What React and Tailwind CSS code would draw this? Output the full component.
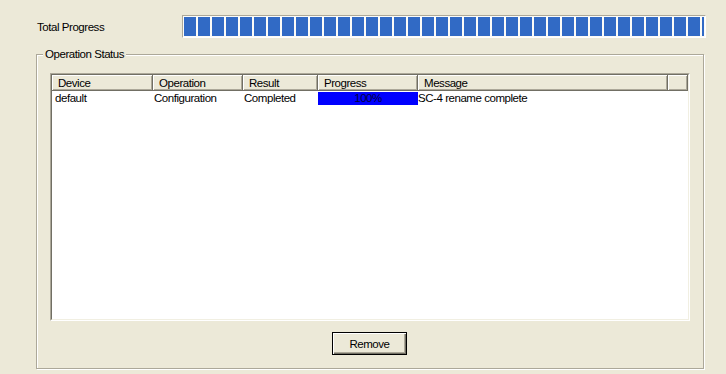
import React from 'react';

const columns = [
  { key: 'device', label: 'Device', width: 'w-[101px]' },
  { key: 'operation', label: 'Operation', width: 'w-[90px]' },
  { key: 'result', label: 'Result', width: 'w-[75px]' },
  { key: 'progress', label: 'Progress', width: 'w-[100px]' },
  { key: 'message', label: 'Message', width: 'w-[250px]' },
];

const rows = [
  {
    id: 1,
    device: 'default',
    operation: 'Configuration',
    result: 'Completed',
    progress: 100,
    message: 'SC-4 rename complete',
  },
];

const HeaderCell = ({ width, children }) => (
  <div
    className={`${width} h-full shrink-0 flex items-center pl-[6px] bg-[#ece9d8] border-r border-b border-[#716f64] shadow-[inset_1px_1px_0_#fff,inset_-1px_-1px_0_#aca899] whitespace-nowrap overflow-hidden`}
  >
    {children}
  </div>
);

const App = () => {
  const blocks = Array.from({ length: 38 });

  return (
    <div
      className="w-[726px] h-[374px] bg-[#ece9d8] text-black text-[11.5px] tracking-[-0.45px] overflow-hidden"
      style={{ fontFamily: '"Liberation Sans", Arial, sans-serif' }}
    >
      {/* Total progress */}
      <div className="flex items-center pt-[15px]">
        <div className="w-[182px] pl-[37px] leading-[14px]">Total Progress</div>
        <div className="w-[524px] h-[23px] p-px border border-t-[#aca899] border-l-[#aca899] border-b-white border-r-white bg-[#fbfbf7]">
          <div className="w-[520px] h-[19px] flex gap-[2px] overflow-hidden">
            {blocks.map((_, i) => (
              <div key={i} className="w-[12px] h-full shrink-0 bg-[#316ac5]" />
            ))}
          </div>
        </div>
      </div>

      {/* Operation status group */}
      <div className="relative ml-[36px] mt-[16px] w-[668px] h-[315px] border border-[#aca899] shadow-[inset_1px_1px_0_#fff,1px_1px_0_#fff]">
        <div className="absolute left-[6px] top-[-8px] px-[2px] leading-[14px] bg-[#ece9d8]">
          Operation Status
        </div>

        {/* List view */}
        <div className="ml-[13px] mt-[18px] w-[640px] h-[248px] border border-t-[#aca899] border-l-[#aca899] border-b-white border-r-white">
          <div className="w-full h-full bg-white border border-t-[#716f64] border-l-[#716f64] border-b-[#f1efe2] border-r-[#f1efe2] overflow-hidden">
            <div className="flex h-[16px] leading-[14px]">
              {columns.map((col) => (
                <HeaderCell key={col.key} width={col.width}>
                  {col.label}
                </HeaderCell>
              ))}
              <HeaderCell width="w-[20px]" />
            </div>

            {rows.map((row) => (
              <div key={row.id} className="flex h-[14px] mt-px leading-[13px]">
                <div className="w-[101px] shrink-0 pl-[3px] whitespace-nowrap">{row.device}</div>
                <div className="w-[90px] shrink-0 pl-px whitespace-nowrap">{row.operation}</div>
                <div className="w-[75px] shrink-0 pl-px whitespace-nowrap">{row.result}</div>
                <div className="w-[100px] h-[13px] shrink-0 bg-[#0000ff] text-[#000040] text-center">
                  {row.progress}%
                </div>
                <div className="w-[250px] shrink-0 whitespace-nowrap">{row.message}</div>
              </div>
            ))}
          </div>
        </div>

        {/* Remove button */}
        <button className="block ml-[295px] mt-[11px] w-[75px] h-[23px] border border-black bg-[#ece9d8] shadow-[inset_1px_1px_0_#fff,inset_-1px_-1px_0_#716f64,inset_-2px_-2px_0_#aca899] leading-[14px]">
          Remove
        </button>
      </div>
    </div>
  );
};

export default App;
